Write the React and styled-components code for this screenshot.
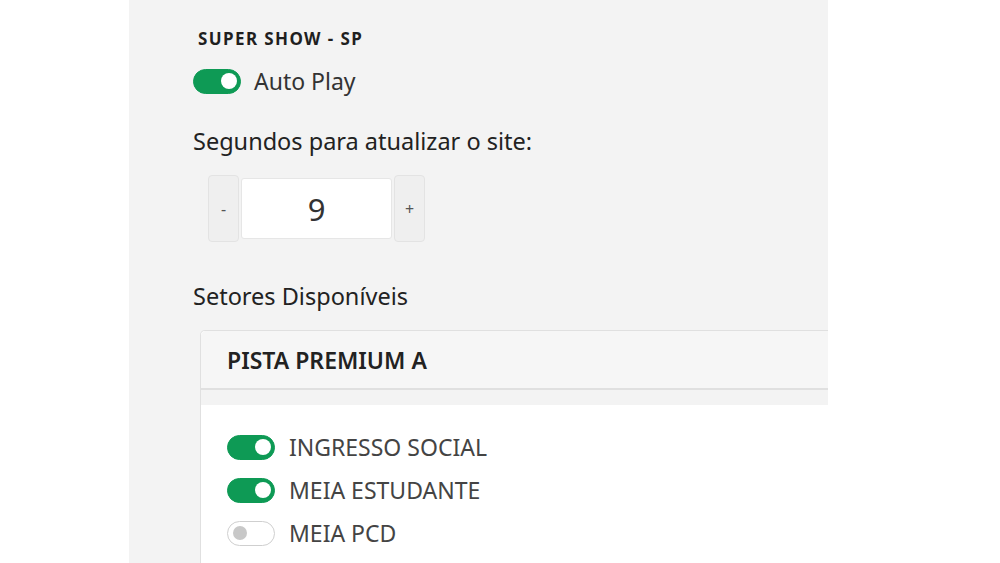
import React, { Component } from 'react';
import styled, { createGlobalStyle } from 'styled-components';

const GlobalStyle = createGlobalStyle`
  body {
    margin: 0;
    background: #fff;
    font-family: 'Noto Sans', 'Open Sans', sans-serif;
  }
`;

const Page = styled.div`
  width: 1000px;
  height: 563px;
  background: #fff;
  overflow: hidden;
`;

const Panel = styled.div`
  margin-left: 129px;
  width: 635px;
  height: 558px;
  padding: 28px 0 0 64px;
  background: #f3f3f3;
  overflow: hidden;
  display: flex;
  flex-direction: column;
`;

const Title = styled.div`
  margin-left: 5px;
  font-size: 17px;
  font-weight: 700;
  letter-spacing: 1.4px;
  color: #1f1f1f;
  line-height: 22px;
`;

const ToggleRow = styled.label`
  display: flex;
  align-items: center;
  gap: ${(p) => p.gap || 14}px;
  height: 26px;
  margin-top: ${(p) => p.top || 0}px;
  font-size: 23px;
  color: ${(p) => p.color || '#444'};
`;

const Switch = styled.span`
  position: relative;
  flex: none;
  width: 48px;
  height: 25px;
  box-sizing: border-box;
  border-radius: 13px;
  background: ${(p) => (p.on ? '#0e9a55' : '#fff')};
  border: 1.5px solid ${(p) => (p.on ? '#0e9a55' : '#cfcfcf')};

  &::after {
    content: '';
    position: absolute;
    top: 50%;
    left: ${(p) => (p.on ? '27px' : '5px')};
    width: ${(p) => (p.on ? '16px' : '14px')};
    height: ${(p) => (p.on ? '16px' : '14px')};
    transform: translateY(-50%);
    border-radius: 50%;
    background: ${(p) => (p.on ? '#fff' : '#c8c8c8')};
  }
`;

const Label = styled.div`
  margin-top: ${(p) => p.top || 0}px;
  font-size: 23.5px;
  color: #222;
  line-height: 28px;
`;

const Stepper = styled.div`
  display: flex;
  align-items: center;
  gap: 2px;
  margin: 20px 0 0 15px;
`;

const StepButton = styled.button`
  width: 31px;
  height: 67px;
  padding: 0;
  border: 1px solid #e3e3e3;
  border-radius: 4px;
  background: #efefef;
  color: #555;
  font-family: inherit;
  font-size: 16px;
`;

const NumberBox = styled.div`
  width: 151px;
  height: 61px;
  box-sizing: border-box;
  border: 1px solid #e6e6e6;
  border-radius: 3px;
  background: #fff;
  display: flex;
  align-items: center;
  justify-content: center;
  font-size: 31px;
  color: #333;
`;

const Card = styled.div`
  margin: 20px 0 0 7px;
  width: 700px;
  flex: 1;
  border: 1px solid #e0e0e0;
  border-bottom: none;
  border-radius: 5px 5px 0 0;
  background: #fff;
`;

const CardHeader = styled.div`
  height: 57px;
  padding-left: 26px;
  display: flex;
  align-items: center;
  background: #f6f6f6;
  border-bottom: 2px solid #e0e0e0;
  border-radius: 5px 5px 0 0;
  font-size: 23px;
  font-weight: 600;
  color: #222;
`;

const Strip = styled.div`
  height: 15px;
  background: #f3f3f3;
`;

const CardBody = styled.div`
  padding: 29px 0 0 26px;
  display: flex;
  flex-direction: column;
  gap: 17px;
`;

const tickets = [
  { name: 'INGRESSO SOCIAL', on: true },
  { name: 'MEIA ESTUDANTE', on: true },
  { name: 'MEIA PCD', on: false },
];

export default class App extends Component {
  state = { seconds: 9 };

  render() {
    return (
      <Page>
        <GlobalStyle />
        <Panel>
          <Title>SUPER SHOW - SP</Title>
          <ToggleRow top={18} gap={13} color="#333">
            <Switch on />
            Auto Play
          </ToggleRow>
          <Label top={33}>Segundos para atualizar o site:</Label>
          <Stepper>
            <StepButton>-</StepButton>
            <NumberBox>{this.state.seconds}</NumberBox>
            <StepButton>+</StepButton>
          </Stepper>
          <Label top={40}>Setores Disponíveis</Label>
          <Card>
            <CardHeader>PISTA PREMIUM A</CardHeader>
            <Strip />
            <CardBody>
              {tickets.map((t) => (
                <ToggleRow key={t.name}>
                  <Switch on={t.on} />
                  {t.name}
                </ToggleRow>
              ))}
            </CardBody>
          </Card>
        </Panel>
      </Page>
    );
  }
}
